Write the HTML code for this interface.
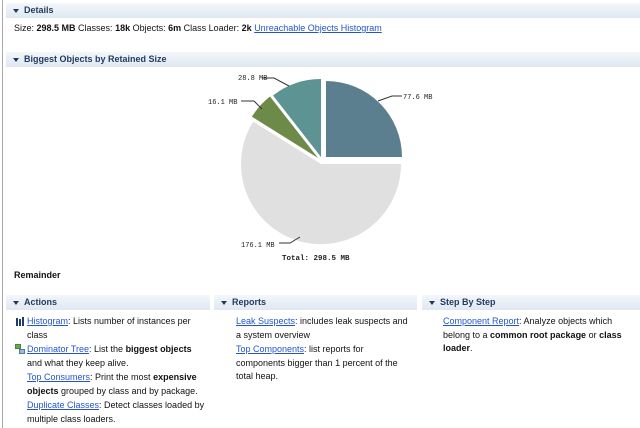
<!DOCTYPE html><html><head><style>
body{margin:0;width:640px;height:428px;background:#fff;font-family:"Liberation Sans",sans-serif;font-size:9px;color:#111;position:relative;overflow:hidden}
.hd{position:absolute;height:15px;background:linear-gradient(#f4f7fb,#dfe7f1);color:#1f3a5f;font-weight:bold;font-size:9px;line-height:15px;padding-left:18px;box-sizing:border-box}
.hd:before{content:"";position:absolute;left:7px;top:6px;border-left:3px solid transparent;border-right:3px solid transparent;border-top:4px solid #1f3a5f}
a{color:#2255cc;text-decoration:underline}
.t{position:absolute;line-height:13.5px;white-space:normal}
b{font-weight:bold}
.mono{font-family:"Liberation Mono",monospace;font-size:7px;fill:#222}
</style></head><body>
<div style="position:absolute;left:2px;top:0;width:1px;height:428px;background:#aaa"></div>
<div class="hd" style="left:6px;top:3px;width:634px">Details</div>
<div class="t" style="left:14px;top:22px">Size: <b>298.5 MB</b> Classes: <b>18k</b> Objects: <b>6m</b> Class Loader: <b>2k</b> <a>Unreachable Objects Histogram</a></div>
<div class="hd" style="left:6px;top:52px;width:634px">Biggest Objects by Retained Size</div>
<svg style="position:absolute;left:0;top:0" width="640" height="290">
<path d="M326,157 L326,81 A76,76 0 0 1 402,157 Z" fill="#5b7f8f"/>
<path d="M321,164 L401,164 A80,80 0 1 1 253.2,121.6 Z" fill="#e0e0e0"/>
<path d="M318,158 L251.9,116.7 A78,78 0 0 1 270,96.5 Z" fill="#6e8a48"/>
<path d="M321,157 L273,95.5 A78,78 0 0 1 321,79 Z" fill="#5e9394"/>
<g stroke="#333" stroke-width="1" fill="none">
<path d="M378,101 L392,96 L402,96"/><path d="M289,86 L274,78 L262,78"/><path d="M262,109 L254,101 L241,101"/><path d="M300,237 L290,243 L279,243"/>
</g>
<text class="mono" x="403" y="99">77.6 MB</text>
<text class="mono" x="238" y="80">28.8 MB</text>
<text class="mono" x="208" y="104">16.1 MB</text>
<text class="mono" x="241" y="247">176.1 MB</text>
<text class="mono" x="282" y="260" style="font-weight:bold;font-size:7.5px">Total: 298.5 MB</text>
</svg>
<div class="t" style="left:14px;top:269px;font-weight:bold">Remainder</div>
<div class="hd" style="left:6px;top:295px;width:204px">Actions</div>
<div class="hd" style="left:214px;top:295px;width:203px">Reports</div>
<div class="hd" style="left:422px;top:295px;width:218px">Step By Step</div>
<div style="position:absolute;left:16px;top:318px;width:2px;height:8px;background:#1f3a6f"></div>
<div style="position:absolute;left:19px;top:319px;width:2px;height:7px;background:#1f3a6f"></div>
<div style="position:absolute;left:22px;top:317px;width:2px;height:9px;background:#1f3a6f"></div>
<div style="position:absolute;left:15px;top:344px;width:4px;height:3px;background:#6a4;border:1px solid #483"></div>
<div style="position:absolute;left:19px;top:349px;width:4px;height:3px;background:#9bd;border:1px solid #579"></div>
<div class="t" style="left:27px;top:315px;width:180px"><a>Histogram</a>: Lists number of instances per class</div>
<div class="t" style="left:27px;top:343px;width:180px"><a>Dominator Tree</a>: List the <b>biggest objects</b> and what they keep alive.</div>
<div class="t" style="left:27px;top:371px;width:185px"><a>Top Consumers</a>: Print the most <b>expensive objects</b> grouped by class and by package.</div>
<div class="t" style="left:27px;top:399px;width:185px"><a>Duplicate Classes</a>: Detect classes loaded by multiple class loaders.</div>
<div class="t" style="left:236px;top:315px;width:178px"><a>Leak Suspects</a>: includes leak suspects and a system overview</div>
<div class="t" style="left:236px;top:343px;width:170px"><a>Top Components</a>: list reports for components bigger than 1 percent of the total heap.</div>
<div class="t" style="left:443px;top:315px;width:192px"><a>Component Report</a>: Analyze objects which belong to a <b>common root package</b> or <b>class loader</b>.</div>
</body></html>
